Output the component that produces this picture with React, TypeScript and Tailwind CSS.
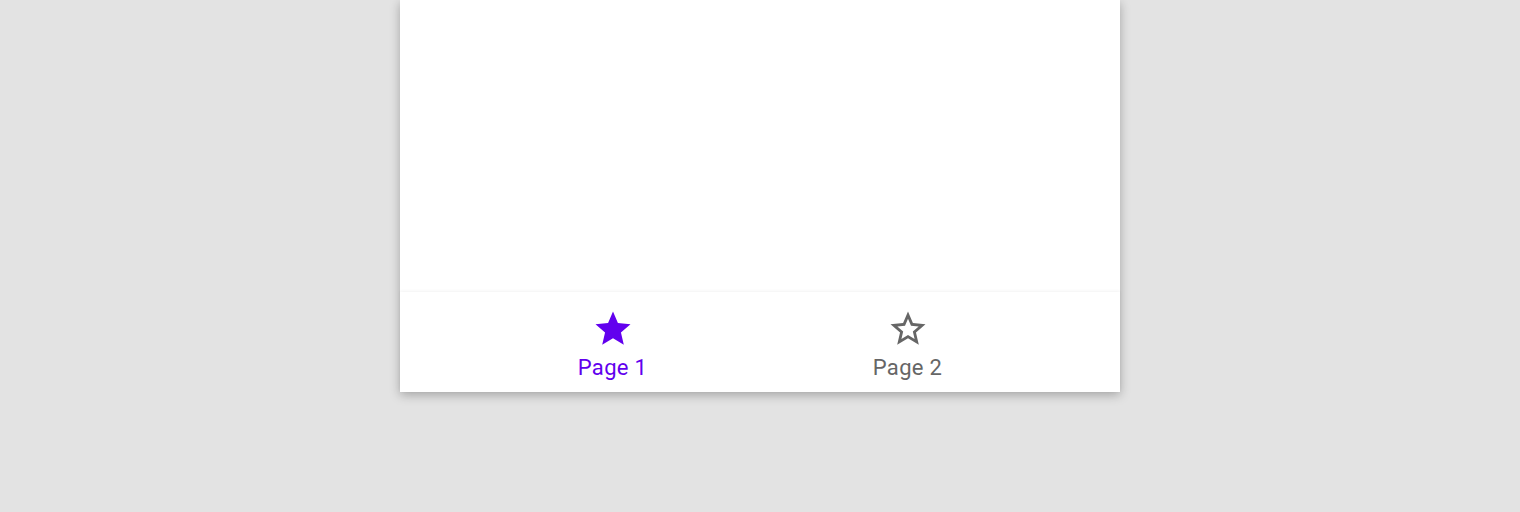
import { useState } from "react";

const STAR_FILLED =
  "M12 17.27L18.18 21l-1.64-7.03L22 9.24l-7.19-.61L12 2 9.19 8.63 2 9.24l5.46 4.73L5.82 21z";
const STAR_OUTLINE =
  "M22 9.24l-7.19-.62L12 2 9.19 8.63 2 9.24l5.46 4.73L5.82 21 12 17.27 18.18 21l-1.63-7.03L22 9.24zM12 15.4l-3.76 2.27 1-4.28-3.32-2.88 4.38-.38L12 6.1l1.71 4.04 4.38.38-3.32 2.88 1 4.28L12 15.4z";

function Star({ filled }: { filled: boolean }) {
  return (
    <svg viewBox="0 0 24 24" className="h-[42px] w-[42px]" fill="currentColor">
      <path d={filled ? STAR_FILLED : STAR_OUTLINE} />
    </svg>
  );
}

export default function App() {
  const [page, setPage] = useState(0);
  const tabs = ["Page 1", "Page 2"];

  return (
    <div className="h-[512px] w-full bg-[#e3e3e3]" style={{ fontFamily: "Roboto, 'Liberation Sans', sans-serif" }}>
      <div className="mx-auto flex h-[392px] w-[720px] flex-col bg-white shadow-[0_3px_10px_rgba(0,0,0,0.28)]">
        <main className="flex-1" />
        <nav className="flex h-[100px] justify-center bg-white shadow-[0_-1px_3px_rgba(0,0,0,0.05)]">
          {tabs.map((label, i) => (
            <button
              key={label}
              onClick={() => setPage(i)}
              className={
                "flex w-[295px] flex-col items-center pt-[16px] " +
                (page === i ? "text-[#6200ee]" : "text-[#666666]")
              }
            >
              <Star filled={page === i} />
              <span className="mt-[4px] text-[22px] leading-[28px] tracking-[0.3px]">{label}</span>
            </button>
          ))}
        </nav>
      </div>
    </div>
  );
}
